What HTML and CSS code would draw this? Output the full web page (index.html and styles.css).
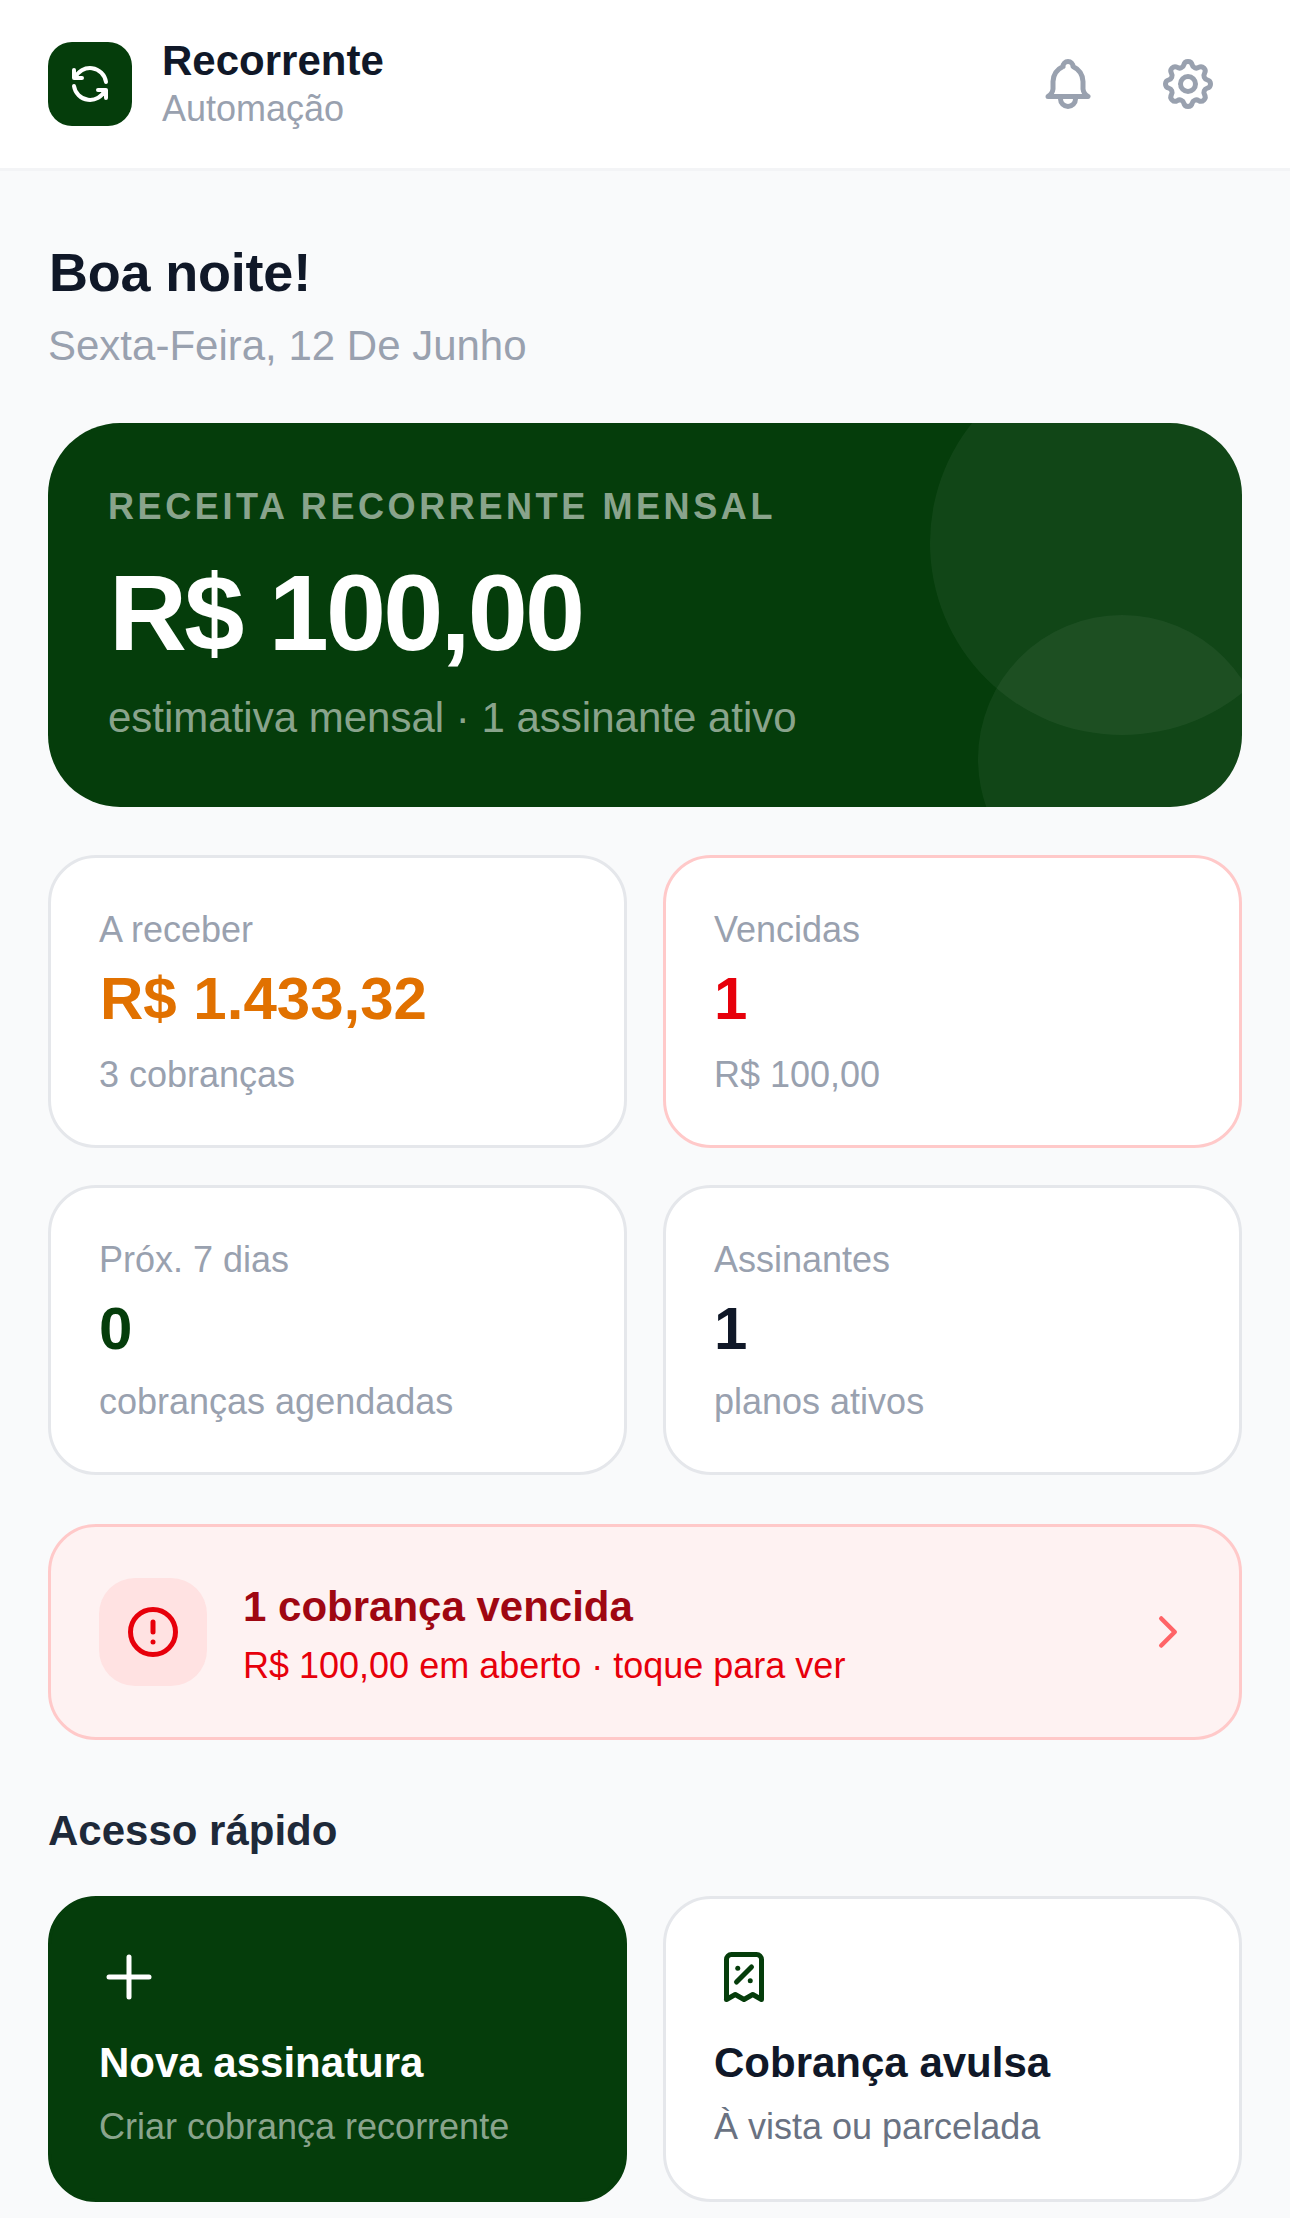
FILE: index.html
```html
<!DOCTYPE html>
<html lang="pt-BR">
  <head>
    <meta charset="UTF-8" />
    <meta name="viewport" content="width=device-width, initial-scale=1.0" />
    <title>Recorrente</title>
    <link rel="stylesheet" href="styles.css">
  </head>
  <body>
    <header class="topbar">
      <div class="brand">
        <div class="brand-logo">
          <svg class="icon-48" viewBox="0 0 24 24"><path d="M20 11a8.1 8.1 0 0 0 -15.5 -2m-.5 -4v4h4" /><path d="M4 13a8.1 8.1 0 0 0 15.5 2m.5 4v-4h-4" /></svg>
        </div>
        <div>
          <div class="brand-name">Recorrente</div>
          <div class="brand-sub">Automação</div>
        </div>
      </div>
      <div class="topbar-actions">
        <svg class="icon-60" viewBox="0 0 24 24"><path d="M10 5a2 2 0 1 1 4 0a7 7 0 0 1 4 6v3a4 4 0 0 0 2 3h-16a4 4 0 0 0 2 -3v-3a7 7 0 0 1 4 -6" /><path d="M9 17v1a3 3 0 0 0 6 0v-1" /></svg>
        <svg class="icon-60" viewBox="0 0 24 24"><path d="M10.325 4.317c.426 -1.756 2.924 -1.756 3.35 0a1.724 1.724 0 0 0 2.573 1.066c1.543 -.94 3.31 .826 2.37 2.37a1.724 1.724 0 0 0 1.065 2.572c1.756 .426 1.756 2.924 0 3.35a1.724 1.724 0 0 0 -1.066 2.573c.94 1.543 -.826 3.31 -2.37 2.37a1.724 1.724 0 0 0 -2.572 1.065c-.426 1.756 -2.924 1.756 -3.35 0a1.724 1.724 0 0 0 -2.573 -1.066c-1.543 .94 -3.31 -.826 -2.37 -2.37a1.724 1.724 0 0 0 -1.065 -2.572c-1.756 -.426 -1.756 -2.924 0 -3.35a1.724 1.724 0 0 0 1.066 -2.573c-.94 -1.543 .826 -3.31 2.37 -2.37c1 .608 2.296 .07 2.572 -1.065z" /><path d="M9 12a3 3 0 1 0 6 0a3 3 0 0 0 -6 0" /></svg>
      </div>
    </header>

    <main class="content">
      <section class="greeting">
        <h1>Boa noite!</h1>
        <p>Sexta-Feira, 12 De Junho</p>
      </section>

      <section class="hero">
        <span class="hero-circle one"></span>
        <span class="hero-circle two"></span>
        <div class="hero-label">RECEITA RECORRENTE MENSAL</div>
        <div class="hero-value">R$ 100,00</div>
        <div class="hero-sub">estimativa mensal · 1 assinante ativo</div>
      </section>

      <section class="stats">
        <div class="stat tall">
          <div class="stat-label">A receber</div>
          <div class="stat-value orange">R$ 1.433,32</div>
          <div class="stat-sub">3 cobranças</div>
        </div>
        <div class="stat tall danger">
          <div class="stat-label">Vencidas</div>
          <div class="stat-value red">1</div>
          <div class="stat-sub">R$ 100,00</div>
        </div>
        <div class="stat">
          <div class="stat-label">Próx. 7 dias</div>
          <div class="stat-value green">0</div>
          <div class="stat-sub">cobranças agendadas</div>
        </div>
        <div class="stat">
          <div class="stat-label">Assinantes</div>
          <div class="stat-value">1</div>
          <div class="stat-sub">planos ativos</div>
        </div>
      </section>

      <section class="alert">
        <div class="alert-icon">
          <svg class="icon-60" viewBox="0 0 24 24"><path d="M3 12a9 9 0 1 0 18 0a9 9 0 0 0 -18 0" /><path d="M12 8v4" /><path d="M12 16h.01" /></svg>
        </div>
        <div class="alert-text">
          <div class="alert-title">1 cobrança vencida</div>
          <div class="alert-sub">R$ 100,00 em aberto · toque para ver</div>
        </div>
        <svg class="alert-arrow" viewBox="0 0 24 24"><path d="M9 6l6 6l-6 6" /></svg>
      </section>

      <h2 class="section-title">Acesso rápido</h2>
      <section class="quick">
        <div class="quick-card primary">
          <svg class="icon-60" viewBox="0 0 24 24"><path d="M12 4v16" /><path d="M4 12h16" /></svg>
          <div class="quick-title">Nova assinatura</div>
          <div class="quick-sub">Criar cobrança recorrente</div>
        </div>
        <div class="quick-card">
          <svg class="icon-60" viewBox="0 0 24 24"><path d="M9 14l6 -6" /><circle class="dot" cx="9.5" cy="8.5" r="1" /><circle class="dot" cx="14.5" cy="13.5" r="1" /><path d="M5 21v-16a2 2 0 0 1 2 -2h10a2 2 0 0 1 2 2v16l-3.5 -2l-3.5 2l-3.5 -2l-3.5 2" /></svg>
          <div class="quick-title">Cobrança avulsa</div>
          <div class="quick-sub">À vista ou parcelada</div>
        </div>
      </section>
    </main>
  </body>
</html>
```

FILE: styles.css
```css
* {
  box-sizing: border-box;
}

body {
  margin: 0;
  background-color: #f9fafb;
  color: #101828;
  font-family: "Liberation Sans", Arial, sans-serif;
}

svg {
  display: block;
  fill: none;
  stroke: currentColor;
  stroke-width: 2;
  stroke-linecap: round;
  stroke-linejoin: round;
}

.icon-48 {
  width: 48px;
  height: 48px;
}

.icon-60 {
  width: 60px;
  height: 60px;
}

/* top bar */
.topbar {
  display: flex;
  align-items: center;
  justify-content: space-between;
  height: 171px;
  padding: 0 72px 0 48px;
  background-color: #fff;
  border-bottom: 3px solid #f3f4f6;
}

.brand {
  display: flex;
  align-items: center;
  gap: 30px;
}

.brand-logo {
  display: flex;
  align-items: center;
  justify-content: center;
  width: 84px;
  height: 84px;
  border-radius: 24px;
  background-color: #053d0b;
  color: #fff;
}

.brand-name {
  padding-top: 1px;
  font-size: 42px;
  line-height: 48px;
  font-weight: 700;
}

.brand-sub {
  font-size: 36px;
  line-height: 48px;
  color: #99a1af;
}

.topbar-actions {
  display: flex;
  gap: 60px;
  color: #99a1af;
}

/* page content */
.content {
  padding: 71px 48px 16px;
}

.greeting h1 {
  margin: 0 0 0 1px;
  font-size: 54px;
  line-height: 60px;
  font-weight: 700;
  letter-spacing: -0.2px;
}

.greeting p {
  margin: 14px 0 0;
  font-size: 42px;
  line-height: 60px;
  color: #99a1af;
}

.hero {
  position: relative;
  overflow: hidden;
  height: 384px;
  margin-top: 47px;
  padding: 60px;
  border-radius: 72px;
  background-color: #053d0b;
  color: #fff;
}

.hero-circle {
  position: absolute;
  border-radius: 50%;
  background-color: rgba(255, 255, 255, 0.05);
}

.hero-circle.one {
  top: -72px;
  right: -72px;
  width: 384px;
  height: 384px;
}

.hero-circle.two {
  right: -24px;
  bottom: -96px;
  width: 288px;
  height: 288px;
}

.hero-label {
  font-size: 36px;
  line-height: 48px;
  font-weight: 700;
  letter-spacing: 3.6px;
  color: rgba(255, 255, 255, 0.55);
}

.hero-value {
  margin: 28px 0 0 1px;
  font-size: 108px;
  line-height: 108px;
  font-weight: 700;
  letter-spacing: -2.8px;
}

.hero-sub {
  margin-top: 24px;
  font-size: 42px;
  line-height: 54px;
  color: rgba(255, 255, 255, 0.55);
}

/* stat cards */
.stats {
  display: grid;
  grid-template-columns: repeat(2, 1fr);
  gap: 37px 36px;
  margin-top: 48px;
}

.stat {
  padding: 48px 48px 43px;
  background-color: #fff;
  border: 3px solid #e5e7eb;
  border-radius: 48px;
}

.stat.danger {
  border-color: #ffc9c9;
}

.stat-label {
  font-size: 36px;
  line-height: 48px;
  color: #99a1af;
}

.stat-value {
  margin-top: 12px;
  font-size: 60px;
  line-height: 66px;
  font-weight: 700;
}

.stat-value.orange {
  margin-left: 1px;
  color: #e17100;
}

.stat-value.red {
  color: #e7000b;
}

.stat-value.green {
  color: #053d0b;
}

.stat-sub {
  margin-top: 13px;
  font-size: 36px;
  line-height: 54px;
  color: #99a1af;
}

.stat.tall .stat-sub {
  margin-top: 16px;
}

/* overdue alert */
.alert {
  display: flex;
  align-items: center;
  gap: 36px;
  height: 216px;
  margin-top: 49px;
  padding: 0 48px;
  background-color: #fef2f2;
  border: 3px solid #ffc9c9;
  border-radius: 48px;
}

.alert-icon {
  display: flex;
  align-items: center;
  justify-content: center;
  width: 108px;
  height: 108px;
  border-radius: 36px;
  background-color: #ffe2e2;
  color: #e7000b;
}

.alert-text {
  flex: 1;
  padding-top: 5px;
}

.alert-title {
  font-size: 42px;
  line-height: 54px;
  font-weight: 700;
  color: #9f0712;
}

.alert-sub {
  margin-top: 8px;
  font-size: 36px;
  line-height: 48px;
  color: #e7000b;
}

.alert-arrow {
  width: 54px;
  height: 54px;
  margin-right: -4px;
  color: #ff6467;
}

/* quick access */
.section-title {
  margin: 61px 0 0;
  font-size: 42px;
  line-height: 60px;
  font-weight: 700;
  color: #1e2939;
}

.quick {
  display: grid;
  grid-template-columns: repeat(2, 1fr);
  gap: 36px;
  margin-top: 35px;
}

.quick-card {
  padding: 48px 48px 45px;
  background-color: #fff;
  border: 3px solid #e5e7eb;
  border-radius: 48px;
  color: #053d0b;
}

.quick-card.primary {
  background-color: #053d0b;
  border-color: #053d0b;
  color: #fff;
}

.quick-title {
  margin-top: 29px;
  font-size: 42px;
  line-height: 54px;
  font-weight: 700;
  color: #101828;
}

.quick-sub {
  margin-top: 10px;
  font-size: 36px;
  line-height: 54px;
  color: #6a7282;
}

.primary .quick-title {
  color: #fff;
}

.primary .quick-sub {
  color: rgba(255, 255, 255, 0.55);
}

.dot {
  fill: currentColor;
  stroke: none;
}
```
